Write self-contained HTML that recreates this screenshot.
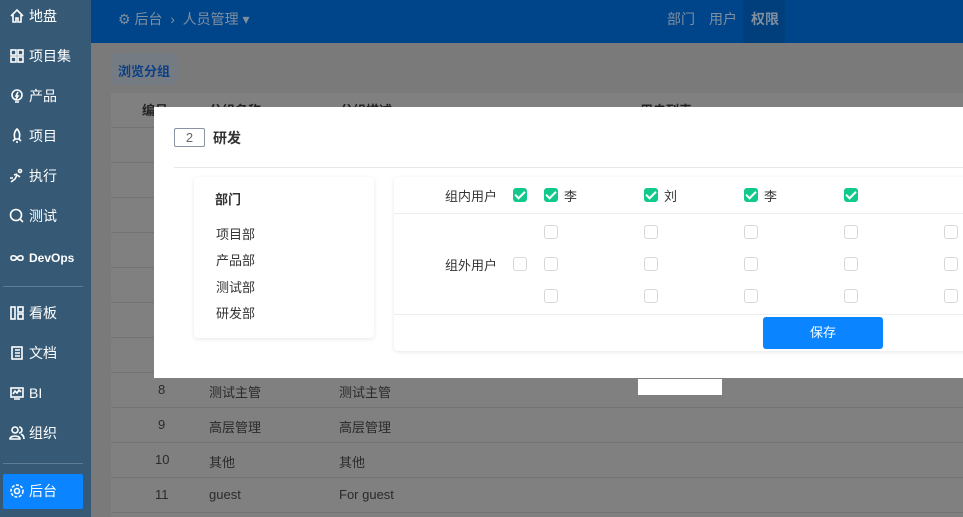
<!DOCTYPE html>
<html style="overflow:hidden;width:963px;height:517px"><head><meta charset="utf-8"><style>
*{margin:0;padding:0;box-sizing:border-box}
body{width:963px;height:517px;overflow:hidden;position:relative;font-family:"Liberation Sans","Noto Sans CJK SC",sans-serif;font-size:13px;background:#7a7a7a}
.side{position:absolute;left:0;top:0;width:91px;height:517px;background:#365a75;color:#fff}
.si{position:absolute;left:9px;height:20px;display:flex;align-items:center;font-size:14px}
.si svg{width:16px;height:16px;margin-right:4px;stroke:#fff;fill:none;stroke-width:1.6}
.sep{position:absolute;left:3px;width:80px;height:1px;background:#5e7d95}
.hdr{position:absolute;left:91px;top:0;right:0;height:43px;background:#00458a;color:#7f8fa0;font-size:14px}
.abs{position:absolute}
.row{position:absolute;left:111px;right:0;height:35px;border-top:1px solid #747474;color:#2a2a2a}
.row span{position:absolute;top:9px}
.modal{position:absolute;left:154px;top:107px;width:820px;height:271px;background:#fff}
.cb{position:absolute;width:14px;height:14px;border:1px solid #d8d8d8;border-radius:3px;background:#fff}
.cb.on{background:#12c98c;border-color:#12c98c}
.cb.on:after{content:"";position:absolute;left:3px;top:0px;width:4px;height:8px;border:solid #fff;border-width:0 2px 2px 0;transform:rotate(45deg)}
.t{position:absolute;color:#333;font-size:13px}
</style></head><body>
<div class="side">
<div class="si" style="top:6px"><svg viewBox="0 0 16 16"><path d="M2 8L8 2l6 6M4 7v7h3v-4h2v4h3V7"/></svg>地盘</div>
<div class="si" style="top:46px"><svg viewBox="0 0 16 16"><rect x="2" y="2" width="5" height="5"/><rect x="9" y="2" width="5" height="5"/><rect x="2" y="9" width="5" height="5"/><rect x="9" y="9" width="5" height="5"/></svg>项目集</div>
<div class="si" style="top:86px"><svg viewBox="0 0 16 16"><circle cx="8" cy="7" r="5"/><path d="M6 14h4M9 4l-2 4h2l-2 3"/></svg>产品</div>
<div class="si" style="top:126px"><svg viewBox="0 0 16 16"><path d="M8 1c3 3 3 7 2 10H6C5 8 5 4 8 1zM6 11l-2 2M10 11l2 2M8 13v2"/></svg>项目</div>
<div class="si" style="top:166px"><svg viewBox="0 0 16 16"><circle cx="11" cy="3" r="1.5"/><path d="M2 14l4-3 2-4 3 2M5 7l3-1M1 10h3"/></svg>执行</div>
<div class="si" style="top:206px"><svg viewBox="0 0 16 16"><circle cx="7" cy="7" r="5.5"/><path d="M11 11l3 3"/></svg>测试</div>
<div class="si" style="top:248px;font-weight:bold;font-size:12px"><svg viewBox="0 0 16 16"><path d="M8 8c-2-3-6-3-6 0s4 3 6 0 6-3 6 0-4 3-6 0"/></svg>DevOps</div>
<div class="sep" style="top:286px"></div>
<div class="si" style="top:303px"><svg viewBox="0 0 16 16"><rect x="2" y="2" width="4" height="12"/><rect x="9" y="2" width="5" height="5"/><rect x="9" y="9" width="5" height="5"/></svg>看板</div>
<div class="si" style="top:343px"><svg viewBox="0 0 16 16"><rect x="3" y="2" width="10" height="12"/><path d="M6 5h5M6 8h5M6 11h5"/></svg>文档</div>
<div class="si" style="top:383px"><svg viewBox="0 0 16 16"><rect x="2" y="3" width="12" height="9"/><path d="M4 9l2-3 2 2 2-3 2 2M5 14h6"/></svg>BI</div>
<div class="si" style="top:423px"><svg viewBox="0 0 16 16"><circle cx="6" cy="5" r="3"/><path d="M1 14c0-4 10-4 10 0zM10 2a3 3 0 010 6M12 9c2 1 3 3 3 5"/></svg>组织</div>
<div class="sep" style="top:463px"></div>
<div style="position:absolute;left:3px;top:474px;width:80px;height:35px;background:#0a84ff;border-radius:2px"></div>
<div class="si" style="top:481px"><svg viewBox="0 0 16 16"><circle cx="8" cy="8" r="2.5"/><circle cx="8" cy="8" r="6" stroke-dasharray="3 1.5"/></svg>后台</div>
</div>
<div class="hdr">
<div class="abs" style="left:27px;top:9px">⚙ 后台 &nbsp;› &nbsp;人员管理 ▾</div>
<div class="abs" style="left:576px;top:9px">部门</div>
<div class="abs" style="left:618px;top:9px">用户</div>
<div class="abs" style="left:652px;top:0;width:42px;height:43px;background:#003e7c"></div>
<div class="abs" style="left:660px;top:9px;font-weight:bold">权限</div>
</div>
<div class="abs" style="left:111px;top:53px;width:66px;height:32px;background:#757b82;border-radius:4px;color:#0b3f85;font-weight:bold;padding:8px 7px">浏览分组</div>
<div class="abs" style="left:111px;top:93px;right:0;height:424px;background:#808080;overflow:hidden">
<div class="abs" style="left:31px;top:7px;color:#222;font-weight:bold">编号 ▴</div>
<div class="abs" style="left:98px;top:7px;color:#222;font-weight:bold">分组名称 ▴</div>
<div class="abs" style="left:229px;top:7px;color:#222;font-weight:bold">分组描述 ▴</div>
<div class="abs" style="left:529px;top:7px;color:#222;font-weight:bold">用户列表 ▴</div>
</div>
<div class="abs" style="left:0;top:0;width:963px;height:517px;overflow:hidden">
<div class="row" style="top:127px"></div><div class="row" style="top:162px"></div><div class="row" style="top:197px"></div><div class="row" style="top:232px"></div><div class="row" style="top:267px"></div><div class="row" style="top:302px"></div><div class="row" style="top:337px"></div>
<div class="row" style="top:372px"><span style="left:47px">8</span><span style="left:98px">测试主管</span><span style="left:228px">测试主管</span></div>
<div class="row" style="top:407px"><span style="left:47px">9</span><span style="left:98px">高层管理</span><span style="left:228px">高层管理</span></div>
<div class="row" style="top:442px"><span style="left:44px">10</span><span style="left:98px">其他</span><span style="left:228px">其他</span></div>
<div class="row" style="top:477px"><span style="left:44px">11</span><span style="left:98px">guest</span><span style="left:228px">For guest</span></div>
<div class="row" style="top:512px;height:5px"></div>
</div>
<div class="abs" style="left:638px;top:379px;width:84px;height:16px;background:#fff"></div>
<div class="modal">
<div class="abs" style="left:20px;top:21px;width:31px;height:19px;border:1px solid #8a93a3;border-radius:2px;color:#666;text-align:center;line-height:17px">2</div>
<div class="abs" style="left:59px;top:21px;font-weight:bold;color:#333;font-size:14px">研发</div>
<div class="abs" style="left:20px;top:60px;right:0;height:1px;background:#e8e8e8"></div>
<div class="abs" style="left:40px;top:70px;width:180px;height:161px;border-radius:4px;box-shadow:0 1px 4px rgba(0,0,0,.1)">
<div class="t" style="left:21px;top:12px;font-weight:bold">部门</div>
<div class="t" style="left:22px;top:47px">项目部</div>
<div class="t" style="left:22px;top:73px">产品部</div>
<div class="t" style="left:22px;top:100px">测试部</div>
<div class="t" style="left:22px;top:126px">研发部</div>
</div>
<div class="abs" style="left:240px;top:70px;width:600px;height:174px;box-shadow:0 1px 4px rgba(0,0,0,.1);border-radius:4px">
<div class="abs" style="left:0;top:36px;right:0;height:1px;background:#eee"></div>
<div class="abs" style="left:0;top:137px;right:0;height:1px;background:#eee"></div>
<div class="t" style="left:51px;top:9px">组内用户</div>
<div class="t" style="left:51px;top:78px">组外用户</div>
<div class="abs" style="left:369px;top:140px;width:120px;height:32px;background:#0a84ff;border-radius:3px;color:#fff;text-align:center;line-height:32px">保存</div>
</div>
</div>
<div class="cb on" style="left:513px;top:188px"></div>
<div class="cb on" style="left:544px;top:188px"></div><div class="t" style="left:564px;top:186px">李</div>
<div class="cb on" style="left:644px;top:188px"></div><div class="t" style="left:664px;top:186px">刘</div>
<div class="cb on" style="left:744px;top:188px"></div><div class="t" style="left:764px;top:186px">李</div>
<div class="cb on" style="left:844px;top:188px"></div>
<div class="cb" style="left:513px;top:257px"></div>
<div class="cb" style="left:544px;top:225px"></div><div class="cb" style="left:644px;top:225px"></div><div class="cb" style="left:744px;top:225px"></div><div class="cb" style="left:844px;top:225px"></div><div class="cb" style="left:944px;top:225px"></div>
<div class="cb" style="left:544px;top:257px"></div><div class="cb" style="left:644px;top:257px"></div><div class="cb" style="left:744px;top:257px"></div><div class="cb" style="left:844px;top:257px"></div><div class="cb" style="left:944px;top:257px"></div>
<div class="cb" style="left:544px;top:289px"></div><div class="cb" style="left:644px;top:289px"></div><div class="cb" style="left:744px;top:289px"></div><div class="cb" style="left:844px;top:289px"></div><div class="cb" style="left:944px;top:289px"></div>
</body></html>
